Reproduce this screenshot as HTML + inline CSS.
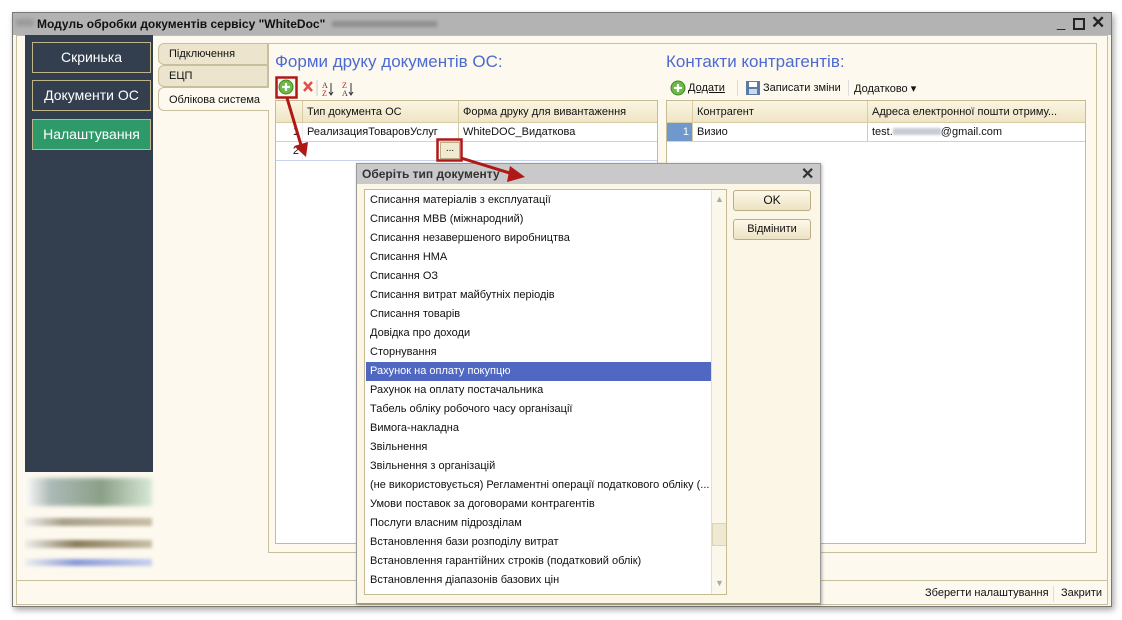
<!DOCTYPE html>
<html><head><meta charset="utf-8"><style>
*{margin:0;padding:0;box-sizing:border-box}
body{width:1122px;height:620px;background:#fff;font-family:"Liberation Sans",Arial,sans-serif;font-size:11px;color:#111;position:relative;overflow:hidden}
.a{position:absolute}
.win{left:12px;top:12px;width:1100px;height:595px;border:1px solid #777;background:#fbf6e6;box-shadow:2px 3px 6px rgba(0,0,0,.35)}
.tb{left:13px;top:13px;width:1098px;height:22px;background:#b3b3b3}
.body{left:16px;top:35px;width:1092px;height:570px;background:#fdf9ee;border:1px solid #c8bf9c}
.nav{left:25px;top:35px;width:128px;height:437px;background:#333f4f}
.btn{left:32px;width:119px;height:31px;border:1px solid #bfb48a;color:#fff;font-size:14px;text-align:center;line-height:29px}
.tab{left:158px;width:110px;height:22px;border:1px solid #c8bf9c;background:#ece4cc;font-size:11px;padding:4px 0 0 10px;border-radius:6px 0 0 6px}
.h{color:#4d6ad2;font-size:17px}
.grid{background:#fff;border:1px solid #c6bb93}
.gh{background:linear-gradient(#fbf5e2,#efe5c5);border-bottom:1px solid #d8cca6;height:22px}
.cell{position:absolute;top:0;height:100%;padding:5px 4px;border-right:1px solid #d8cca6;white-space:nowrap;overflow:hidden}
.row{position:absolute;left:0;right:0;height:19px;border-bottom:1px solid #c7d3ea}
.li{position:absolute;left:1px;width:345px;height:19px;padding:3px 4px;white-space:nowrap}
.dbtn{left:733px;width:78px;height:21px;border:1px solid #b9ae88;border-radius:3px;background:linear-gradient(#fdf8e8,#ece2c3);text-align:center;line-height:19px;font-size:12px}
</style></head><body>
<div class="a win"></div>
<div class="a tb"></div>
<div class="a" style="left:16px;top:19px;width:18px;height:7px;background:#999;filter:blur(2px)"></div>
<div class="a" style="left:37px;top:17px;font-weight:bold;font-size:12px">Модуль обробки документів сервісу "WhiteDoc"</div>
<div class="a" style="left:332px;top:21px;width:105px;height:6px;background:#8f8f8f;filter:blur(1.5px)"></div>
<div class="a" style="left:1057px;top:14px;font-size:15px;color:#222">_</div>
<div class="a" style="left:1073px;top:18px;width:12px;height:12px;border:2px solid #222"></div>
<div class="a" style="left:1091px;top:13px;font-size:17px;font-weight:bold;color:#222">✕</div>
<div class="a body"></div>
<div class="a nav"></div>
<div class="a btn" style="top:42px">Скринька</div>
<div class="a btn" style="top:80px">Документи ОС</div>
<div class="a btn" style="top:119px;background:#2f9a69">Налаштування</div>
<div class="a" style="left:25px;top:478px;width:127px;height:28px;background:linear-gradient(90deg,#fff,#9aa 20%,#6f8a6f 60%,#cfe6d0);filter:blur(2px);opacity:.8"></div>
<div class="a" style="left:25px;top:518px;width:127px;height:8px;background:linear-gradient(90deg,#eee,#a8a08a 30%,#c8bfa6);filter:blur(1.5px)"></div>
<div class="a" style="left:25px;top:540px;width:127px;height:8px;background:linear-gradient(90deg,#eee,#8a7d5c 40%,#c8bfa6);filter:blur(1.5px)"></div>
<div class="a" style="left:25px;top:559px;width:127px;height:7px;background:linear-gradient(90deg,#eee,#8a9ad8 40%,#c6d0ee);filter:blur(1.5px)"></div>
<div class="a tab" style="top:43px">Підключення</div>
<div class="a tab" style="top:65px">ЕЦП</div>
<div class="a tab" style="top:87px;height:24px;background:#fdf9ee;border-right:none;padding-top:6px">Облікова система</div>
<div class="a" style="left:268px;top:43px;width:829px;height:510px;border:1px solid #c8bf9c;border-left:none"></div>
<div class="a" style="left:268px;top:43px;width:1px;height:45px;background:#c8bf9c"></div>
<div class="a" style="left:268px;top:110px;width:1px;height:443px;background:#c8bf9c"></div>
<div class="a h" style="left:275px;top:52px">Форми друку документів ОС:</div>
<div class="a h" style="left:666px;top:52px">Контакти контрагентів:</div>
<svg class="a" style="left:276px;top:77px" width="90" height="22"><circle cx="10" cy="10" r="7" fill="#6cb947" stroke="#3f8a2a"/><path d="M10 6v8M6 10h8" stroke="#fff" stroke-width="2.2"/><path d="M28 5l8 9M36 5l-8 9" stroke="#e05050" stroke-width="2.5"/><line x1="41" y1="3" x2="41" y2="19" stroke="#ccc"/>
<text x="46" y="11" font-size="8" fill="#335" font-family="Liberation Serif">A</text><text x="46" y="19" font-size="8" fill="#b22" font-family="Liberation Serif">Z</text><path d="M55 6v11M53 15l2 3 2-3" stroke="#333" fill="none"/>
<text x="66" y="11" font-size="8" fill="#b22" font-family="Liberation Serif">Z</text><text x="66" y="19" font-size="8" fill="#335" font-family="Liberation Serif">A</text><path d="M75 6v11M73 15l2 3 2-3" stroke="#333" fill="none"/></svg>
<div class="a grid" style="left:275px;top:100px;width:383px;height:444px">
 <div class="gh" style="position:relative"><div class="cell" style="left:0;width:27px"></div><div class="cell" style="left:27px;width:156px">Тип документа ОС</div><div class="cell" style="left:183px;width:199px;border:none">Форма друку для вивантаження</div></div>
 <div class="row" style="top:22px"><div class="cell" style="left:0;width:27px;padding:3px;text-align:right;border-color:#eee">1</div><div class="cell" style="left:27px;width:156px;padding:3px 4px">РеализацияТоваровУслуг</div><div class="cell" style="left:183px;padding:3px 4px;border:none">WhiteDOC_Видаткова</div></div>
 <div class="row" style="top:41px"><div class="cell" style="left:0;width:27px;padding:3px;text-align:right;border-color:#eee">2</div><div class="cell" style="left:27px;width:156px"></div></div>
</div>
<div class="a" style="left:440px;top:142px;width:20px;height:17px;border:1px solid #b9ae88;background:#f2ead0;text-align:center;font-size:10px;line-height:12px">...</div>
<svg class="a" style="left:670px;top:79px" width="18" height="18"><circle cx="8" cy="9" r="7" fill="#6cb947" stroke="#3f8a2a"/><path d="M8 5v8M4 9h8" stroke="#fff" stroke-width="2.2"/></svg>
<div class="a" style="left:688px;top:82px;text-decoration:underline">Додати</div>
<div class="a" style="left:737px;top:80px;width:1px;height:16px;background:#ddd"></div>
<svg class="a" style="left:745px;top:80px" width="16" height="16"><rect x="1" y="1" width="14" height="14" fill="#5a7aa8"/><rect x="4" y="2" width="8" height="5" fill="#fff"/><rect x="4" y="9" width="8" height="5" fill="#cfd8e6"/></svg>
<div class="a" style="left:763px;top:82px">Записати зміни</div>
<div class="a" style="left:848px;top:80px;width:1px;height:16px;background:#ddd"></div>
<div class="a" style="left:854px;top:82px">Додатково ▾</div>
<div class="a grid" style="left:666px;top:100px;width:420px;height:444px">
 <div class="gh" style="position:relative"><div class="cell" style="left:0;width:26px"></div><div class="cell" style="left:26px;width:175px">Контрагент</div><div class="cell" style="left:201px;width:218px;border:none">Адреса електронної пошти отриму...</div></div>
 <div class="row" style="top:22px"><div class="cell" style="left:0;width:26px;padding:3px;text-align:right;background:#6f98cc;color:#fff">1</div><div class="cell" style="left:26px;width:175px;padding:3px 4px">Визио</div><div class="cell" style="left:201px;padding:3px 4px;border:none">test.<span style="display:inline-block;width:48px;height:7px;background:#c8ccd4;filter:blur(1px)"></span>@gmail.com</div></div>
</div>
<div class="a" style="left:17px;top:580px;width:1090px;height:1px;background:#c8bf9c"></div>
<div class="a" style="left:925px;top:587px">Зберегти налаштування</div>
<div class="a" style="left:1053px;top:586px;width:1px;height:16px;background:#ddd"></div>
<div class="a" style="left:1061px;top:587px">Закрити</div>
<div class="a" style="left:356px;top:163px;width:465px;height:441px;background:#fbf6e6;border:1px solid #999;box-shadow:1px 1px 3px rgba(0,0,0,.3)"></div>
<div class="a" style="left:357px;top:164px;width:463px;height:20px;background:#c9c9c9"></div>
<div class="a" style="left:362px;top:167px;font-weight:bold;font-size:12px;color:#333">Оберіть тип документу</div>
<div class="a" style="left:801px;top:164px;font-size:16px;font-weight:bold;color:#333">✕</div>
<div class="a" style="left:364px;top:189px;width:363px;height:406px;background:#fff;border:1px solid #c6bb93;overflow:hidden">
<div class="li" style="top:1px">Списання матеріалів з експлуатації</div>
<div class="li" style="top:20px">Списання МВВ (міжнародний)</div>
<div class="li" style="top:39px">Списання незавершеного виробництва</div>
<div class="li" style="top:58px">Списання НМА</div>
<div class="li" style="top:77px">Списання ОЗ</div>
<div class="li" style="top:96px">Списання витрат майбутніх періодів</div>
<div class="li" style="top:115px">Списання товарів</div>
<div class="li" style="top:134px">Довідка про доходи</div>
<div class="li" style="top:153px">Сторнування</div>
<div class="li" style="top:172px;background:#5068c2;color:#fff">Рахунок на оплату покупцю</div>
<div class="li" style="top:191px">Рахунок на оплату постачальника</div>
<div class="li" style="top:210px">Табель обліку робочого часу організації</div>
<div class="li" style="top:229px">Вимога-накладна</div>
<div class="li" style="top:248px">Звільнення</div>
<div class="li" style="top:267px">Звільнення з організацій</div>
<div class="li" style="top:286px">(не використовується) Регламентні операції податкового обліку (...</div>
<div class="li" style="top:305px">Умови поставок за договорами контрагентів</div>
<div class="li" style="top:324px">Послуги власним підрозділам</div>
<div class="li" style="top:343px">Встановлення бази розподілу витрат</div>
<div class="li" style="top:362px">Встановлення гарантійних строків (податковий облік)</div>
<div class="li" style="top:381px">Встановлення діапазонів базових цін</div>
<div class="a" style="left:346px;top:0;width:16px;height:404px;background:#fbf7ea;border-left:1px solid #e6dfc8"></div>
<div class="a" style="left:350px;top:4px;font-size:9px;color:#aaa">▲</div>
<div class="a" style="left:350px;top:388px;font-size:9px;color:#aaa">▼</div>
<div class="a" style="left:347px;top:333px;width:15px;height:23px;background:#efe8d2;border:1px solid #ddd3b5"></div>
</div>
<div class="a dbtn" style="top:190px">OK</div>
<div class="a dbtn" style="top:219px;font-size:11px">Відмінити</div>
<svg class="a" style="left:0;top:0" width="1122" height="620">
<rect x="276.5" y="77.5" width="20" height="20" fill="none" stroke="#b01818" stroke-width="2.5"/>
<rect x="437.5" y="139.5" width="24" height="21" fill="none" stroke="#b01818" stroke-width="2.5"/>
<path d="M287 98 L301 145" stroke="#b01818" stroke-width="3"/><path d="M294 146 L306 157 L308 142 Z" fill="#b01818"/>
<path d="M461 158 L513 174" stroke="#b01818" stroke-width="3"/><path d="M510 166 L525 177 L507 182 Z" fill="#b01818"/>
</svg>
</body></html>
